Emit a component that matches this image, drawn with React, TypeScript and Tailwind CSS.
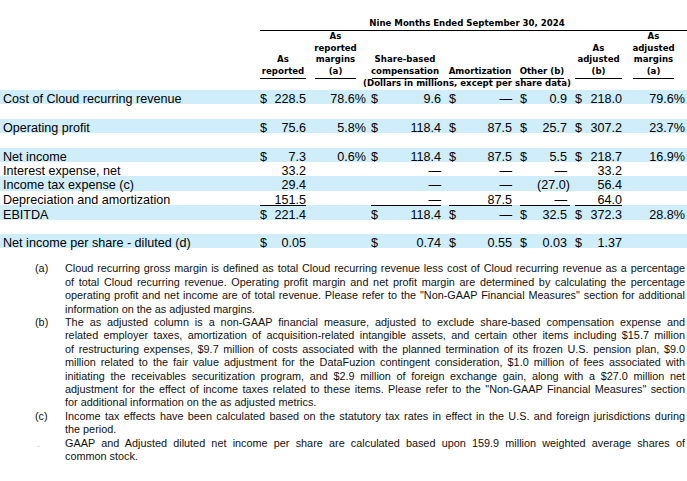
import React from "react";

type Row = {
  label: string;
  blue: boolean;
  total?: boolean;
  cells: string[];
};

// dollar-sign columns: reported, share-based, amortization, other, adjusted
const moneyCols = [0, 2, 3, 4, 5];

// inner extents of every column (where the $ sits and where values end)
const innerCls = [
  "ml-[1px] mr-[1px]",
  "pr-[3px]",
  "ml-[2px] mr-[1px]",
  "ml-[7px] mr-[2px]",
  "ml-[6px] mr-[1px]",
  "ml-[4px] mr-[2px]",
  "pr-[2px]",
];

const headCls = [
  "ml-[1px] mr-[1px]",
  "ml-[8px] mr-[13px]",
  "ml-[3px] mr-[4px]",
  "ml-[7px] mr-[3px]",
  "ml-[6px] mr-[7px]",
  "ml-[4px] mr-[2px]",
  "ml-[9px] mr-[13px]",
];

const headers: string[][] = [
  ["As", "reported"],
  ["As", "reported", "margins", "(a)"],
  ["Share-based", "compensation"],
  ["Amortization"],
  ["Other (b)"],
  ["As", "adjusted", "(b)"],
  ["As", "adjusted", "margins", "(a)"],
];

const D = "\u2014";

const rows: (Row | null)[] = [
  { label: "Cost of Cloud recurring revenue", blue: true, cells: ["$228.5", "78.6%", "$9.6", "$" + D, "$0.9", "$218.0", "79.6%"] },
  null,
  { label: "Operating profit", blue: true, cells: ["$75.6", "5.8%", "$118.4", "$87.5", "$25.7", "$307.2", "23.7%"] },
  null,
  { label: "Net income", blue: true, cells: ["$7.3", "0.6%", "$118.4", "$87.5", "$5.5", "$218.7", "16.9%"] },
  { label: "Interest expense, net", blue: false, cells: ["33.2", "", D, D, D, "33.2", ""] },
  { label: "Income tax expense (c)", blue: true, cells: ["29.4", "", D, D, "(27.0)", "56.4", ""] },
  { label: "Depreciation and amortization", blue: false, cells: ["151.5", "", D, "87.5", D, "64.0", ""] },
  { label: "EBITDA", blue: true, total: true, cells: ["$221.4", "", "$118.4", "$" + D, "$32.5", "$372.3", "28.8%"] },
  null,
  { label: "Net income per share - diluted (d)", blue: true, cells: ["$0.05", "", "$0.74", "$0.55", "$0.03", "$1.37", ""] },
];

const notes: { mark: string; lines: string[] }[] = [
  {
    mark: "(a)",
    lines: [
      "Cloud recurring gross margin is defined as total Cloud recurring revenue less cost of Cloud recurring revenue as a percentage",
      "of total Cloud recurring revenue. Operating profit margin and net profit margin are determined by calculating the percentage",
      "operating profit and net income are of total revenue. Please refer to the \"Non-GAAP Financial Measures\" section for additional",
      "information on the as adjusted margins.",
    ],
  },
  {
    mark: "(b)",
    lines: [
      "The as adjusted column is a non-GAAP financial measure, adjusted to exclude share-based compensation expense and",
      "related employer taxes, amortization of acquisition-related intangible assets, and certain other items including $15.7 million",
      "of restructuring expenses, $9.7 million of costs associated with the planned termination of its frozen U.S. pension plan, $9.0",
      "million related to the fair value adjustment for the DataFuzion contingent consideration, $1.0 million of fees associated with",
      "initiating the receivables securitization program, and $2.9 million of foreign exchange gain, along with a $27.0 million net",
      "adjustment for the effect of income taxes related to these items. Please refer to the \"Non-GAAP Financial Measures\" section",
      "for additional information on the as adjusted metrics.",
    ],
  },
  {
    mark: "(c)",
    lines: [
      "Income tax effects have been calculated based on the statutory tax rates in effect in the U.S. and foreign jurisdictions during",
      "the period.",
    ],
  },
  {
    mark: ".",
    lines: [
      "GAAP and Adjusted diluted net income per share are calculated based upon 159.9 million weighted average shares of",
      "common stock.",
    ],
  },
];

const gridCls = "grid grid-cols-[259px_48px_62px_73px_72px_57px_53px_63px]";

const ValueCell = ({ value, col, total }: { value: string; col: number; total?: boolean }) => {
  const money = moneyCols.includes(col);
  const hasDollar = value.startsWith("$");
  const v = hasDollar ? value.slice(1) : value;
  const pad = col === 4 && !v.endsWith(")") ? "pr-[3px]" : "";
  if (!money) {
    return <div className={`flex h-full items-center justify-end ${innerCls[col]}`}>{v}</div>;
  }
  return (
    <div className={`flex h-full items-center justify-between ${innerCls[col]} ${total ? "border-t border-black" : ""}`}>
      <span>{hasDollar ? "$" : ""}</span>
      <span className={pad}>{v}</span>
    </div>
  );
};

const App = () => {
  return (
    <div className="w-[687px] h-[481px] overflow-hidden bg-white text-black font-['Liberation_Sans',Arial,sans-serif]">
      <div className="pt-[17px] font-['DejaVu_Sans',Verdana,sans-serif] font-bold text-[8.6px] leading-[11.7px]">
        <div className="ml-[260px] h-[14px] flex items-center justify-center pr-[13px] border-b border-black">
          Nine Months Ended September 30, 2024
        </div>
        <div className={`${gridCls} items-end h-[47px]`}>
          <div />
          {headers.map((lines, i) => (
            <div key={i} className={`flex flex-col items-center border-b border-black whitespace-nowrap ${headCls[i]}`}>
              {lines.map((l) => (
                <span key={l}>{l}</span>
              ))}
            </div>
          ))}
        </div>
        <div className="ml-[260px] h-[12px] flex items-center justify-center pr-[13px] whitespace-nowrap">
          (Dollars in millions, except per share data)
        </div>
      </div>

      <div className="text-[12.6px]">
        {rows.map((row, r) =>
          row ? (
            <div key={r} className={`${gridCls} h-[14.4px] ${row.blue ? "bg-[#cfedfa]" : ""}`}>
              <div className="pl-[3px] flex items-center whitespace-nowrap">{row.label}</div>
              {row.cells.map((c, i) => (
                <ValueCell key={i} value={c} col={i} total={row.total && c !== ""} />
              ))}
            </div>
          ) : (
            <div key={r} className="h-[14.4px]" />
          ),
        )}
      </div>

      <div className="mt-[14px] text-[10.85px] leading-[13.4px] text-[#111]">
        {notes.map((n) => (
          <div key={n.mark} className="flex">
            <div className={`w-[65px] pl-[35px] ${n.mark === "." ? "text-[#bbb] pl-[37px]" : ""}`}>{n.mark}</div>
            <div className="w-[620px]">
              {n.lines.map((l, i) => (
                <div
                  key={i}
                  className={`whitespace-nowrap ${i < n.lines.length - 1 ? "text-justify [text-align-last:justify]" : ""}`}
                >
                  {l}
                </div>
              ))}
            </div>
          </div>
        ))}
      </div>
    </div>
  );
};

export default App;
